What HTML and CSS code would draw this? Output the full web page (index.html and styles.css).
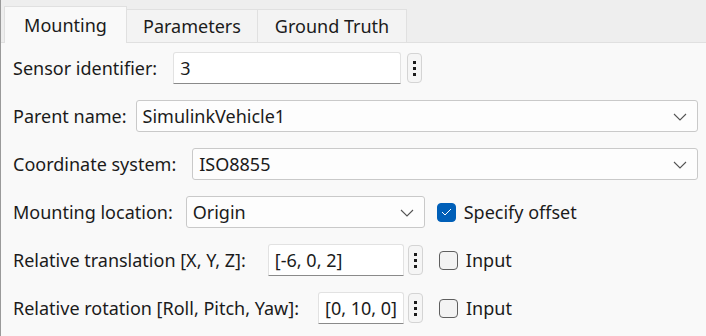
FILE: index.html
```html
<!DOCTYPE html>
<html lang="en">
<head>
    <meta charset="UTF-8">
    <title>Mounting</title>
    <link rel="stylesheet" href="styles.css">
</head>
<body>
    <div class="panel">
        <div class="tabs">
            <div class="tab active">Mounting</div>
            <div class="tab t-par">Parameters</div>
            <div class="tab t-gt">Ground Truth</div>
        </div>
        <div class="content">
            <div class="row">
                <span class="label l-id">Sensor identifier:</span>
                <div class="edit w-id">3</div>
                <div class="dots"><i></i><i></i><i></i></div>
            </div>
            <div class="row">
                <span class="label l-parent">Parent name:</span>
                <div class="combo grow">SimulinkVehicle1
                    <svg class="chev" width="14" height="8" viewBox="0 0 14 8"><path d="M1 1 L7 7 L13 1" fill="none" stroke="#555" stroke-width="1.1"/></svg>
                </div>
            </div>
            <div class="row">
                <span class="label l-coord">Coordinate system:</span>
                <div class="combo grow">ISO8855
                    <svg class="chev" width="14" height="8" viewBox="0 0 14 8"><path d="M1 1 L7 7 L13 1" fill="none" stroke="#555" stroke-width="1.1"/></svg>
                </div>
            </div>
            <div class="row">
                <span class="label l-loc">Mounting location:</span>
                <div class="combo w-loc">Origin
                    <svg class="chev" width="14" height="8" viewBox="0 0 14 8"><path d="M1 1 L7 7 L13 1" fill="none" stroke="#555" stroke-width="1.1"/></svg>
                </div>
                <label class="check first">
                    <span class="box checked">
                        <svg width="11" height="8" viewBox="0 0 11 8"><path d="M1 4 L4 7 L10 1" fill="none" stroke="#fff" stroke-width="1"/></svg>
                    </span>
                    Specify offset
                </label>
            </div>
            <div class="row">
                <span class="label l-tr">Relative translation [X, Y, Z]:</span>
                <div class="edit w-tr">[-6, 0, 2]</div>
                <div class="dots near"><i></i><i></i><i></i></div>
                <label class="check"><span class="box"></span>Input</label>
            </div>
            <div class="row">
                <span class="label l-rot">Relative rotation [Roll, Pitch, Yaw]:</span>
                <div class="edit w-rot">[0, 10, 0]</div>
                <div class="dots near"><i></i><i></i><i></i></div>
                <label class="check"><span class="box"></span>Input</label>
            </div>
        </div>
    </div>
</body>
</html>
```

FILE: styles.css
```css
body {
    margin: 0;
    font-family: "Noto Sans", "Open Sans", sans-serif;
    font-size: 18px;
    color: #1b1b1b;
    background: #f9f9f9;
}
.panel {
    border-left: 1px solid #9a9a9a;
    height: 336px;
    box-sizing: border-box;
}
.tabs {
    display: flex;
    align-items: flex-end;
    height: 43px;
    padding-left: 3px;
    background: #eeeeee;
    border-bottom: 1px solid #e0e0e0;
    box-sizing: border-box;
}
.tab {
    height: 33px;
    line-height: 32px;
    width: 131px;
    text-align: center;
    background: #f3f3f3;
    border: 1px solid #e0e0e0;
    border-bottom: none;
    border-left: none;
    box-sizing: border-box;
}
.tab.active {
    width: 123px;
    height: 37px;
    line-height: 36px;
    margin-bottom: -1px;
    background: #f9f9f9;
    border-left: 1px solid #e0e0e0;
}
.tab.t-gt { width: 149px; }
.content {
    padding: 9px 8px 0 12px;
    display: flex;
    flex-direction: column;
    gap: 16px;
}
.row {
    display: flex;
    align-items: center;
    height: 32px;
}
.label {
    margin-right: 14px;
    white-space: nowrap;
}
/* label gaps tuned so the fields line up like the original dialog */
.l-id { margin-right: 16px; }
.l-parent { margin-right: 9px; }
.l-coord { margin-right: 16px; }
.l-loc { margin-right: 13px; }
.l-tr { margin-right: 22px; }
.l-rot { margin-right: 19px; }
.edit, .combo {
    height: 32px;
    box-sizing: border-box;
    padding: 0 6px;
    line-height: 30px;
    white-space: nowrap;
    overflow: hidden;
}
.edit {
    background: #ffffff;
    border: 1px solid #e2e2e2;
    border-bottom: 1px solid #8a8a8a;
    border-radius: 3px 3px 0 0;
}
.combo {
    position: relative;
    background: #fdfdfd;
    border: 1px solid #c9c9c9;
    border-radius: 3px;
}
.chev {
    position: absolute;
    right: 10px;
    top: 12px;
}
.grow { flex: 1; }
.w-id { width: 228px; }
.w-loc { width: 239px; }
.w-tr { width: 136px; }
.w-rot { width: 86px; }
.dots {
    width: 15px;
    height: 30px;
    margin-left: 6px;
    box-sizing: border-box;
    border: 1px solid #d4d4d4;
    border-radius: 4px;
    background: #f5f5f5;
    display: flex;
    flex-direction: column;
    align-items: center;
    justify-content: center;
    gap: 3px;
}
.dots.near { margin-left: 4px; }
.dots i {
    display: block;
    width: 3px;
    height: 3px;
    background: #1b1b1b;
}
.check {
    display: flex;
    align-items: center;
    gap: 8px;
    margin-left: 16px;
}
.check.first { margin-left: 12px; }
.box {
    width: 19px;
    height: 19px;
    box-sizing: border-box;
    border: 1px solid #5f5f5f;
    border-radius: 4px;
    background: #f3f3f3;
    display: flex;
    align-items: center;
    justify-content: center;
}
.box.checked {
    background: #005fb8;
    border-color: #005fb8;
}
```
